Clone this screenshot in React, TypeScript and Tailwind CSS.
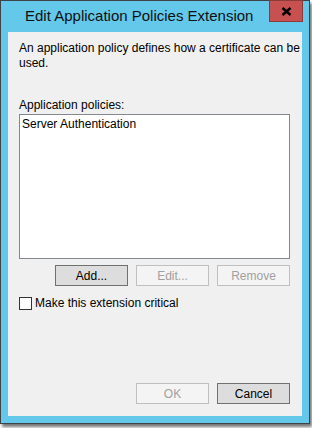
import React from "react";

const font = { fontFamily: '"Liberation Sans", Arial, sans-serif' };

function WinButton({ label, disabled }: { label: string; disabled?: boolean }) {
  return (
    <button
      type="button"
      disabled={disabled}
      className={
        disabled
          ? "w-[73px] h-[21px] border border-[#bfbfbf] bg-[#f4f4f4] text-[#a0a0a0] text-[12px] leading-none"
          : "w-[73px] h-[21px] border border-[#707070] bg-[#dddddd] text-black text-[12px] leading-none"
      }
    >
      {label}
    </button>
  );
}

export default function App() {
  return (
    <div className="w-[312px] h-[428px] bg-white" style={font}>
      <div className="relative w-[310px] h-[424px] border border-[#3f4347] bg-[#63c8e9] flex flex-col shadow-[2px_3px_3px_rgba(0,0,0,0.55)]">
        {/* title bar */}
        <div className="h-[31px] flex items-center pl-[24px] text-[15px] text-[#111]">
          Edit Application Policies Extension
        </div>
        <button
          type="button"
          className="absolute top-[-1px] right-[6px] w-[34px] h-[22px] bg-[#c75050] border border-[#8c3a3a] flex items-center justify-center"
        >
          <svg width="11" height="9" viewBox="0 0 11 9">
            <path d="M1.5 1 L9.5 8 M9.5 1 L1.5 8" stroke="#000" strokeWidth="2.4" />
          </svg>
        </button>

        {/* client area */}
        <div className="mx-[7px] mb-[7px] flex-1 bg-[#f0f0f0] pl-[11px] pr-[12px] pt-[9px] flex flex-col text-[12px] text-black">
          <p className="leading-[15px] whitespace-nowrap">
            An application policy defines how a certificate can be
            <br />
            used.
          </p>
          <div className="mt-[27px] leading-[15px]">Application policies:</div>
          <div className="mt-[1px] h-[145px] border border-[#828790] bg-white px-[2px] pt-[2px] leading-[15px]">
            Server Authentication
          </div>
          <div className="mt-[6px] flex justify-end gap-[8px]">
            <WinButton label="Add..." />
            <WinButton label="Edit..." disabled />
            <WinButton label="Remove" disabled />
          </div>
          <label className="mt-[10px] flex items-center gap-[3px] leading-[15px]">
            <span className="w-[13px] h-[13px] border border-[#333] bg-white" />
            Make this extension critical
          </label>
          <div className="mt-auto mb-[12px] flex justify-end gap-[8px]">
            <WinButton label="OK" disabled />
            <WinButton label="Cancel" />
          </div>
        </div>
      </div>
    </div>
  );
}
